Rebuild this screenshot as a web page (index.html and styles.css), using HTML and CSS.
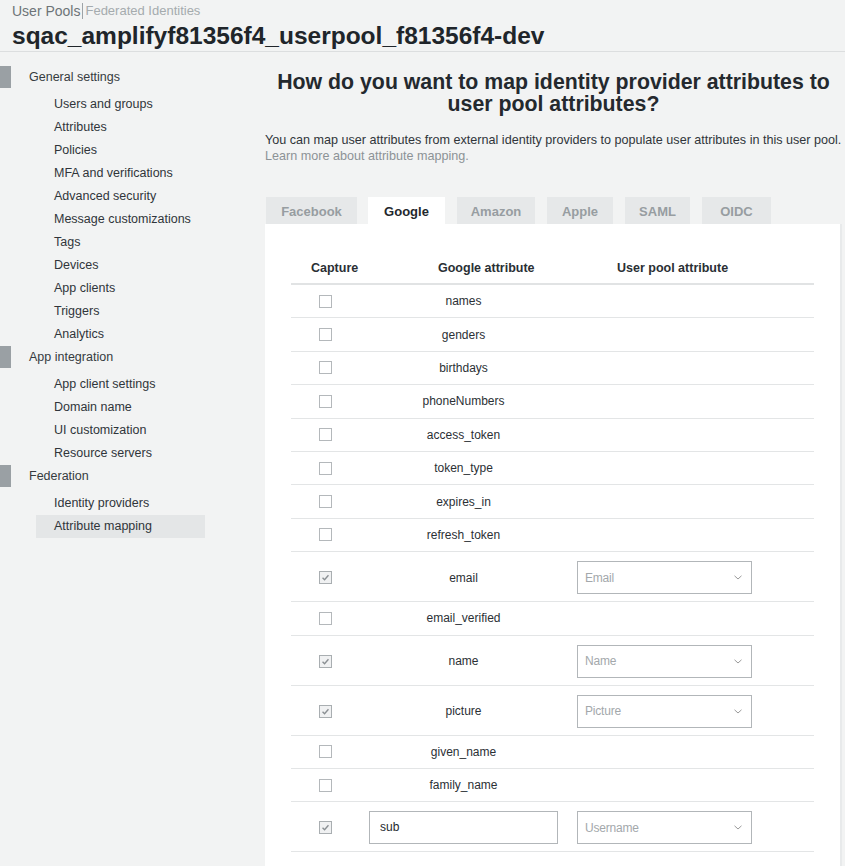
FILE: index.html
```html
<!DOCTYPE html>
<html>
<head>
<meta charset="utf-8">
<link rel="stylesheet" href="styles.css">
</head>
<body>
<header class="top">
  <div class="crumbs"><span class="crumb-a">User Pools</span><span class="crumb-sep"></span><span class="crumb-b">Federated Identities</span></div>
  <h1 class="pool-title">sqac_amplifyf81356f4_userpool_f81356f4-dev</h1>
</header>
<div class="layout">
  <nav class="sidebar">
    <div class="group">
      <div class="group-title">General settings</div>
      <a class="item">Users and groups</a>
      <a class="item">Attributes</a>
      <a class="item">Policies</a>
      <a class="item">MFA and verifications</a>
      <a class="item">Advanced security</a>
      <a class="item">Message customizations</a>
      <a class="item">Tags</a>
      <a class="item">Devices</a>
      <a class="item">App clients</a>
      <a class="item">Triggers</a>
      <a class="item">Analytics</a>
    </div>
    <div class="group">
      <div class="group-title">App integration</div>
      <a class="item">App client settings</a>
      <a class="item">Domain name</a>
      <a class="item">UI customization</a>
      <a class="item">Resource servers</a>
    </div>
    <div class="group">
      <div class="group-title">Federation</div>
      <a class="item">Identity providers</a>
      <a class="item active">Attribute mapping</a>
    </div>
  </nav>
  <main class="main">
    <h2 class="heading">How do you want to map identity provider attributes to user pool attributes?</h2>
    <p class="intro">You can map user attributes from external identity providers to populate user attributes in this user pool.<br><a class="learn">Learn more about attribute mapping.</a></p>
    <div class="tabs">
      <div class="tab t-fb">Facebook</div>
      <div class="tab t-go active">Google</div>
      <div class="tab t-am">Amazon</div>
      <div class="tab t-ap">Apple</div>
      <div class="tab t-sa">SAML</div>
      <div class="tab t-oi">OIDC</div>
    </div>
    <section class="panel">
      <div class="table">
        <div class="row head">
          <div class="c1 h1c">Capture</div>
          <div class="c2 h2c">Google attribute</div>
          <div class="c3 h3c">User pool attribute</div>
        </div>
        <div class="row"><div class="c1"><span class="cb"></span></div><div class="c2">names</div><div class="c3"></div></div>
        <div class="row"><div class="c1"><span class="cb"></span></div><div class="c2">genders</div><div class="c3"></div></div>
        <div class="row"><div class="c1"><span class="cb"></span></div><div class="c2">birthdays</div><div class="c3"></div></div>
        <div class="row"><div class="c1"><span class="cb"></span></div><div class="c2">phoneNumbers</div><div class="c3"></div></div>
        <div class="row"><div class="c1"><span class="cb"></span></div><div class="c2">access_token</div><div class="c3"></div></div>
        <div class="row"><div class="c1"><span class="cb"></span></div><div class="c2">token_type</div><div class="c3"></div></div>
        <div class="row"><div class="c1"><span class="cb"></span></div><div class="c2">expires_in</div><div class="c3"></div></div>
        <div class="row"><div class="c1"><span class="cb"></span></div><div class="c2">refresh_token</div><div class="c3"></div></div>
        <div class="row tall"><div class="c1"><span class="cb on"><svg viewBox="0 0 13 13"><path d="M3 6.8 L5.4 9.2 L10 3.8" fill="none" stroke="#8a8f93" stroke-width="1.6"/></svg></span></div><div class="c2">email</div><div class="c3"><div class="select"><span>Email</span><svg class="chev" viewBox="0 0 8 5"><path d="M0.5 0.8 L4 4 L7.5 0.8" fill="none" stroke="#9a9a9a" stroke-width="1"/></svg></div></div></div>
        <div class="row"><div class="c1"><span class="cb"></span></div><div class="c2">email_verified</div><div class="c3"></div></div>
        <div class="row tall"><div class="c1"><span class="cb on"><svg viewBox="0 0 13 13"><path d="M3 6.8 L5.4 9.2 L10 3.8" fill="none" stroke="#8a8f93" stroke-width="1.6"/></svg></span></div><div class="c2">name</div><div class="c3"><div class="select"><span>Name</span><svg class="chev" viewBox="0 0 8 5"><path d="M0.5 0.8 L4 4 L7.5 0.8" fill="none" stroke="#9a9a9a" stroke-width="1"/></svg></div></div></div>
        <div class="row tall"><div class="c1"><span class="cb on"><svg viewBox="0 0 13 13"><path d="M3 6.8 L5.4 9.2 L10 3.8" fill="none" stroke="#8a8f93" stroke-width="1.6"/></svg></span></div><div class="c2">picture</div><div class="c3"><div class="select"><span>Picture</span><svg class="chev" viewBox="0 0 8 5"><path d="M0.5 0.8 L4 4 L7.5 0.8" fill="none" stroke="#9a9a9a" stroke-width="1"/></svg></div></div></div>
        <div class="row"><div class="c1"><span class="cb"></span></div><div class="c2">given_name</div><div class="c3"></div></div>
        <div class="row"><div class="c1"><span class="cb"></span></div><div class="c2">family_name</div><div class="c3"></div></div>
        <div class="row tall"><div class="c1"><span class="cb on"><svg viewBox="0 0 13 13"><path d="M3 6.8 L5.4 9.2 L10 3.8" fill="none" stroke="#8a8f93" stroke-width="1.6"/></svg></span></div><div class="c2 left"><div class="input">sub</div></div><div class="c3"><div class="select"><span>Username</span><svg class="chev" viewBox="0 0 8 5"><path d="M0.5 0.8 L4 4 L7.5 0.8" fill="none" stroke="#9a9a9a" stroke-width="1"/></svg></div></div></div>
      </div>
    </section>
  </main>
</div>
</body>
</html>
```

FILE: styles.css
```css
* { box-sizing: border-box; }
html, body { margin: 0; padding: 0; }
body {
  background: #f2f3f3;
  font-family: "Liberation Sans", Arial, Helvetica, sans-serif;
  color: #2a2e33;
  width: 845px;
  height: 866px;
  overflow: hidden;
}
.top {
  padding: 3px 12px 0 12px;
  height: 52px;
  border-bottom: 1px solid #dcdedf;
}
.crumbs {
  display: flex;
  align-items: center;
  font-size: 14px;
  line-height: 16px;
  height: 16px;
}
.crumb-a { color: #6d7377; }
.crumb-sep {
  width: 1px;
  height: 16px;
  background: #9da3a7;
  margin: 0 2px;
}
.crumb-b { color: #a5abae; font-size: 13px; }
.pool-title {
  margin: 2px 0 0 0;
  font-size: 24.5px;
  line-height: 30px;
  font-weight: bold;
  color: #20252a;
}
.layout {
  display: flex;
}
.sidebar {
  width: 265px;
  flex: none;
  padding-top: 13.5px;
}
.group-title {
  position: relative;
  height: 23px;
  line-height: 23px;
  padding-left: 29px;
  font-size: 12.5px;
  color: #363b40;
  margin-bottom: 4px;
}
.group-title::before {
  content: "";
  position: absolute;
  left: 0;
  top: 0;
  width: 11px;
  height: 22px;
  background: #9aa0a4;
}
.item {
  display: block;
  height: 23px;
  line-height: 23px;
  margin-left: 36px;
  width: 169px;
  padding-left: 18px;
  font-size: 12.5px;
  color: #30353a;
}
.item.active { background: #e4e6e7; }
.main {
  width: 577px;
  flex: none;
}
.heading {
  margin: 19px 0 0 0;
  font-size: 21.3px;
  line-height: 22px;
  font-weight: bold;
  text-align: center;
  color: #24292e;
  padding: 0;
}
.intro {
  margin: 17px 0 0 0;
  font-size: 12.6px;
  line-height: 16px;
  color: #30353a;
  white-space: nowrap;
}
.learn { color: #8c9296; }
.tabs {
  display: flex;
  margin-top: 33px;
  height: 27px;
  padding-left: 1px;
}
.tab {
  height: 27px;
  line-height: 29px;
  text-align: center;
  font-size: 13px;
  font-weight: bold;
  color: #979da1;
  background: #e6e8e9;
  margin-right: 12px;
}
.tab.t-fb { margin-right: 11px; }
.tab.active { background: #ffffff; color: #23282d; }
.t-fb { width: 91px; }
.t-go { width: 77px; }
.t-am { width: 78px; }
.t-ap { width: 66px; }
.t-sa { width: 65px; }
.t-oi { width: 69px; }
.panel {
  background: #ffffff;
  border-right: 2px solid #e8eaeb;
  padding: 26px 26px 20px 26px;
  height: 660px;
}
.table { width: 523px; }
.row {
  display: flex;
  align-items: center;
  height: 33.4px;
  border-bottom: 1px solid #e3e5e6;
  font-size: 12px;
  color: #2b3035;
}
.row.head {
  height: 35px;
  padding-top: 3px;
  border-bottom: 2px solid #e1e3e4;
  font-size: 12.5px;
  font-weight: bold;
  color: #2a2f34;
}
.row.tall { height: 50px; padding-top: 2px; }
.c1 { width: 78px; padding-left: 28px; display: flex; align-items: center; }
.c2 { width: 208px; padding-right: 19px; text-align: center; }
.c3 { flex: 1; }
.h1c { padding-left: 20px; }
.h2c { text-align: left; padding-left: 69px; }
.h3c { padding-left: 40px; }
.c2.left { text-align: left; }
.cb {
  display: block;
  width: 13px;
  height: 13px;
  border: 1px solid #b4b8bb;
  background: #fff;
}
.cb.on { background: #f0f1f2; border-color: #a9aeb1; }
.cb svg { display: block; width: 11px; height: 11px; }
.select {
  width: 175px;
  height: 33px;
  border: 1px solid #b2b6b9;
  display: flex;
  align-items: center;
  justify-content: space-between;
  padding: 0 9px 0 7px;
  color: #a3a8ab;
  font-size: 12px;
  letter-spacing: -0.2px;
}
.chev { width: 8px; height: 5px; display: block; }
.input {
  width: 189px;
  height: 33px;
  border: 1px solid #b2b6b9;
  line-height: 31px;
  padding-left: 10px;
  color: #24292e;
  font-size: 12px;
}
```
